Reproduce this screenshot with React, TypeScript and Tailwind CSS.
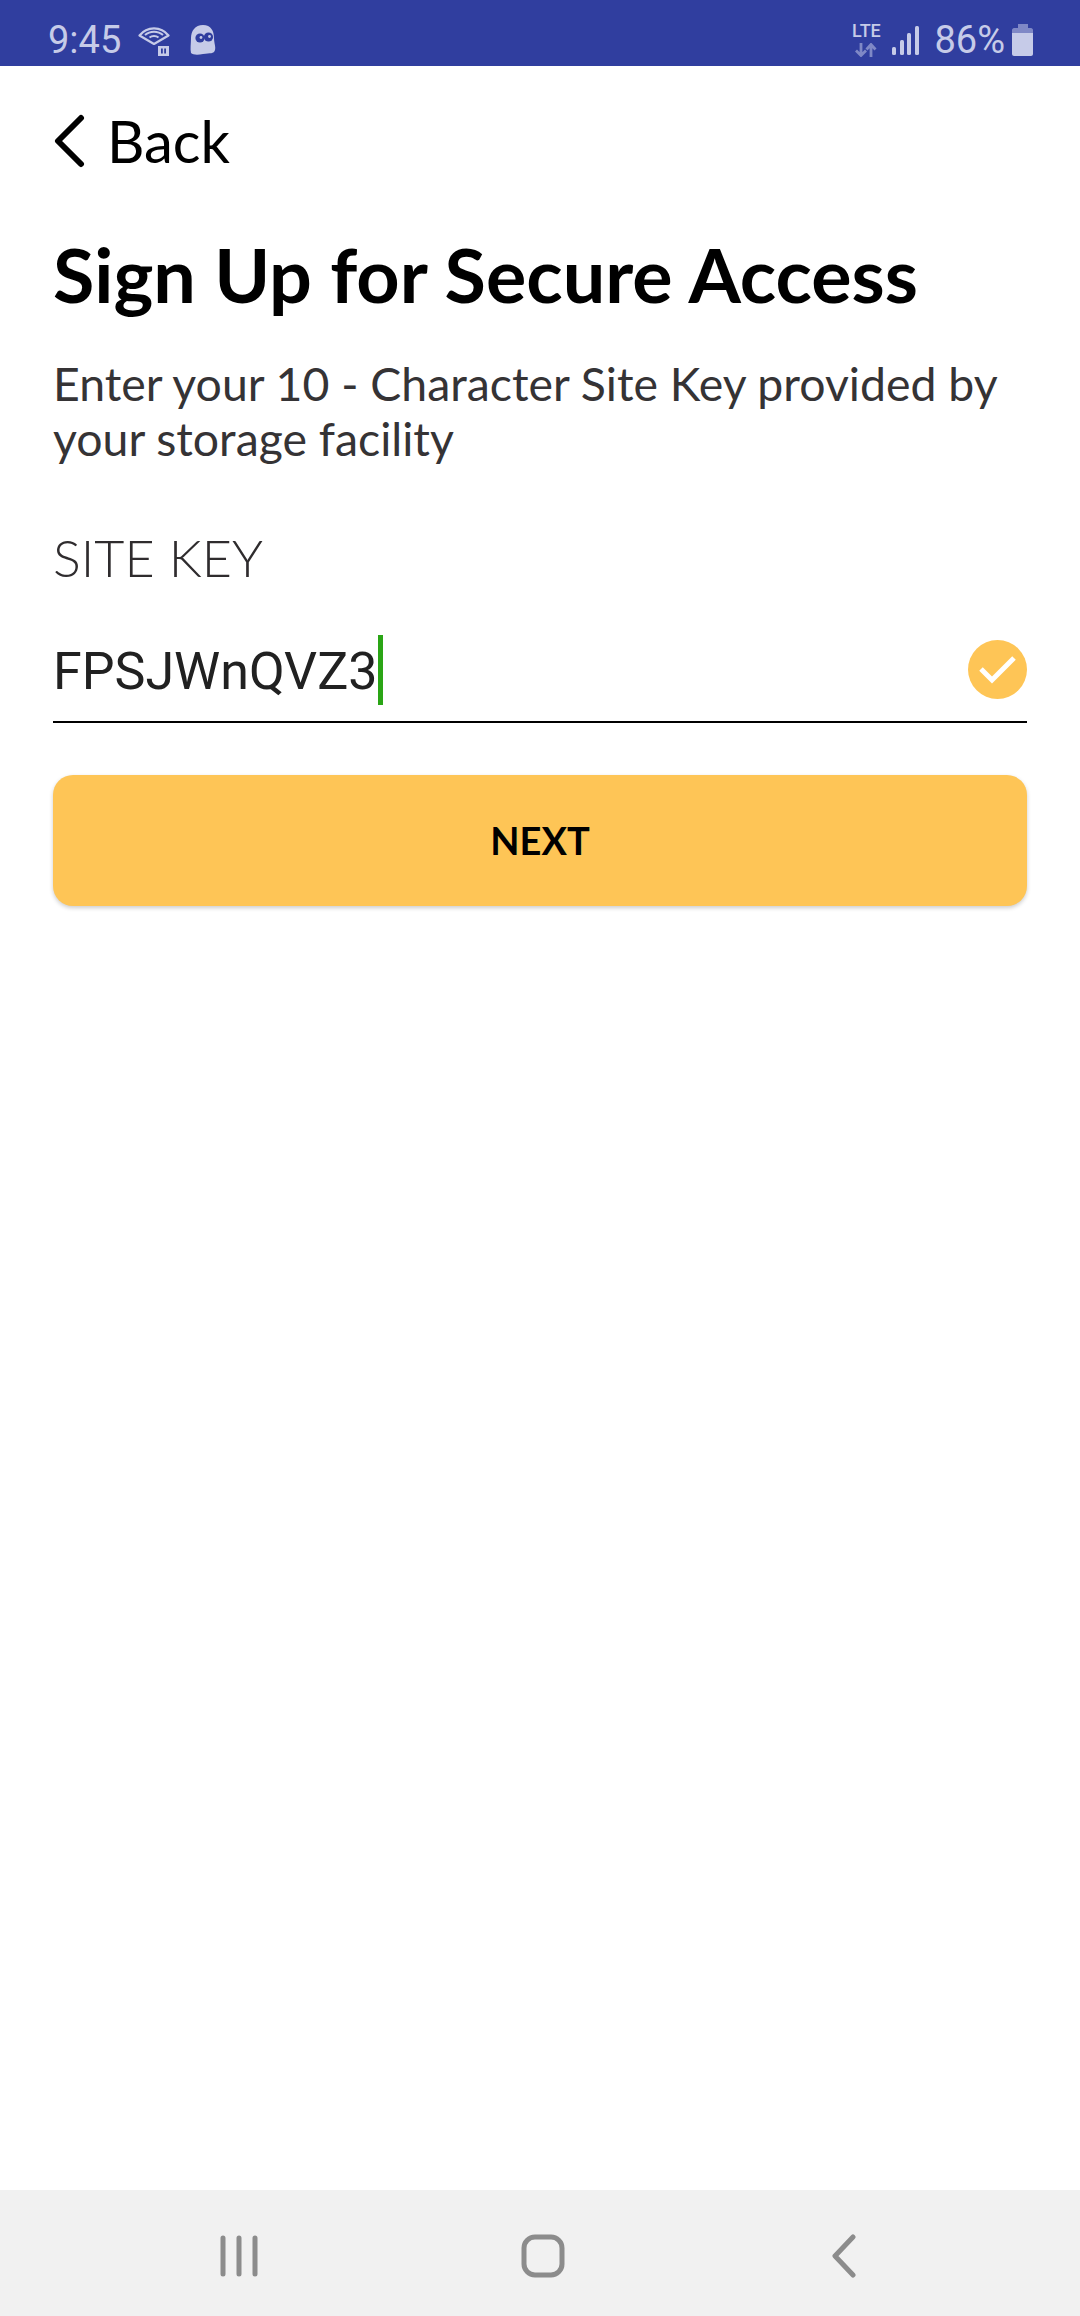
function WifiCallIcon() {
  return (
    <svg width="32" height="32" viewBox="0 0 32 32" fill="none" stroke="#c6cbe8" className="mt-[2px]">
      <path d="M1.5 10.5C9 1 23 1 30.5 10.5L16 19Z" strokeWidth="2.2" strokeLinejoin="round" />
      <path d="M7 10C12 5.5 20 5.5 25 10" strokeWidth="2" />
      <path d="M11.5 12.5C14 10.5 18 10.5 20.5 12.5" strokeWidth="2" />
      <rect x="20" y="21" width="11" height="10" fill="#c6cbe8" stroke="none" />
      <rect x="23" y="23.5" width="1.8" height="5" fill="#303e9f" stroke="none" />
      <rect x="26.2" y="23.5" width="1.8" height="5" fill="#303e9f" stroke="none" />
    </svg>
  );
}

function GhostIcon() {
  return (
    <svg width="26" height="30" viewBox="0 0 26 30">
      <path d="M13 0C21 0 24 6 24 13C24 18 26 22 25 25C24 29 20 28 13 29C8 30 3 30 1 28C0 24 1 18 1 13C1 6 5 0 13 0Z" fill="#c6cbe8" />
      <circle cx="10" cy="13" r="4.6" fill="#303e9f" />
      <circle cx="18.5" cy="12" r="4.6" fill="#303e9f" />
      <circle cx="11" cy="12.5" r="1.4" fill="#c6cbe8" />
      <circle cx="19.5" cy="11.5" r="1.4" fill="#c6cbe8" />
    </svg>
  );
}

function LteIcon() {
  return (
    <div className="flex w-[30px] flex-col items-center gap-[5px]">
      <span className="font-['Roboto',sans-serif] text-[18px] leading-[14px] font-medium text-[#c6cbe8]">LTE</span>
      <svg width="24" height="14" viewBox="0 0 24 14" fill="none" stroke="#7f88c6" strokeWidth="2.8">
        <path d="M7 0V12M2 7.5L7 12.5L12 7.5" />
        <path d="M17 14V2M12.5 6.5L17 1.5L21.5 6.5" />
      </svg>
    </div>
  );
}

function SignalIcon() {
  return (
    <svg width="27" height="29" viewBox="0 0 27 29" fill="#c6cbe8">
      <rect x="0" y="21" width="4" height="8" rx="1.5" />
      <rect x="8" y="14" width="4" height="15" rx="1.5" />
      <rect x="15" y="7" width="4" height="22" rx="1.5" />
      <rect x="23" y="0" width="4" height="29" rx="1.5" />
    </svg>
  );
}

function BatteryIcon() {
  return (
    <svg width="21" height="32" viewBox="0 0 21 32">
      <path d="M6 0H16V4H6Z" fill="#7f88c6" />
      <path d="M2 4H19C20 4 21 5 21 6V9H0V6C0 5 1 4 2 4Z" fill="#7f88c6" />
      <path d="M0 9H21V30C21 31 20 32 19 32H2C1 32 0 31 0 30Z" fill="#c6cbe8" />
    </svg>
  );
}

function StatusBar() {
  return (
    <div className="flex h-[66px] items-center justify-between bg-[#303e9f] pt-[14px] pr-[47px] pl-[48px] font-['Roboto',sans-serif] text-[#c6cbe8]">
      <div className="flex items-center">
        <span className="text-[38px] leading-none">9:45</span>
        <div className="ml-[17px]">
          <WifiCallIcon />
        </div>
        <div className="ml-[20px]">
          <GhostIcon />
        </div>
      </div>
      <div className="flex items-center">
        <LteIcon />
        <div className="mr-[15px] ml-[11px]">
          <SignalIcon />
        </div>
        <span className="mr-[7px] text-[38px] leading-none">86%</span>
        <BatteryIcon />
      </div>
    </div>
  );
}

function NavBar() {
  return (
    <div className="flex h-[126px] items-center bg-[#f1f1f1] pt-[6px] pl-[219px]">
      <svg width="42" height="42" viewBox="0 0 42 42" stroke="#8c8c8c" strokeWidth="5" strokeLinecap="round">
        <path d="M4 3V39M20 3V39M36 3V39" />
      </svg>
      <svg width="44" height="44" viewBox="0 0 44 44" fill="none" className="ml-[260px]" stroke="#8c8c8c" strokeWidth="5">
        <rect x="3" y="3" width="38" height="38" rx="11" />
      </svg>
      <svg width="26" height="44" viewBox="0 0 26 44" fill="none" className="ml-[266px]" stroke="#8c8c8c" strokeWidth="5" strokeLinecap="round" strokeLinejoin="round">
        <path d="M22 3L4 22L22 41" />
      </svg>
    </div>
  );
}

export default function App() {
  return (
    <div className="flex h-[2316px] w-[1080px] flex-col bg-white font-['Lato',sans-serif]">
      <StatusBar />
      <div className="flex-1 px-[53px]">
        <div className="mt-[45px] flex h-[60px] items-center">
          <svg width="32" height="54" viewBox="0 0 32 54" fill="none" stroke="#000" strokeWidth="6" strokeLinecap="round" strokeLinejoin="round">
            <path d="M28 4L5 27L28 50" />
          </svg>
          <span className="ml-[22px] text-[58px] leading-none text-black">Back</span>
        </div>
        <h1 className="mt-[58px] text-[75.5px] leading-[90px] font-bold text-black">Sign Up for Secure Access</h1>
        <p className="mt-[37px] text-[46.4px] leading-[55px] text-[#353335]">
          Enter your 10 - Character Site Key provided by your storage facility
        </p>
        <div className="mt-[61px] text-[52px] leading-[60px] font-light text-[#2f2c2e]">SITE KEY</div>
        <div className="mt-[50px] flex h-[86px] items-center justify-between border-b-2 border-black pb-[14px]">
          <div className="flex items-center font-['Roboto',sans-serif] text-[52px] leading-none text-[#212121]">
            FPSJWnQVZ3
            <span className="mb-[5px] h-[70px] w-[5px] bg-[#2aa515]" />
          </div>
          <svg width="59" height="59" viewBox="0 0 59 59" fill="none" className="mb-[5px]">
            <circle cx="29.5" cy="29.5" r="29.5" fill="#fec556" />
            <path d="M13 29L24 40L46 18" stroke="#fff" strokeWidth="5" />
          </svg>
        </div>
        <button className="mt-[52px] flex h-[131px] w-full items-center justify-center rounded-[20px] bg-[#fec556] text-[38px] font-bold text-black shadow-[0_2px_4px_rgba(0,0,0,0.2)]">
          NEXT
        </button>
      </div>
      <NavBar />
    </div>
  );
}
